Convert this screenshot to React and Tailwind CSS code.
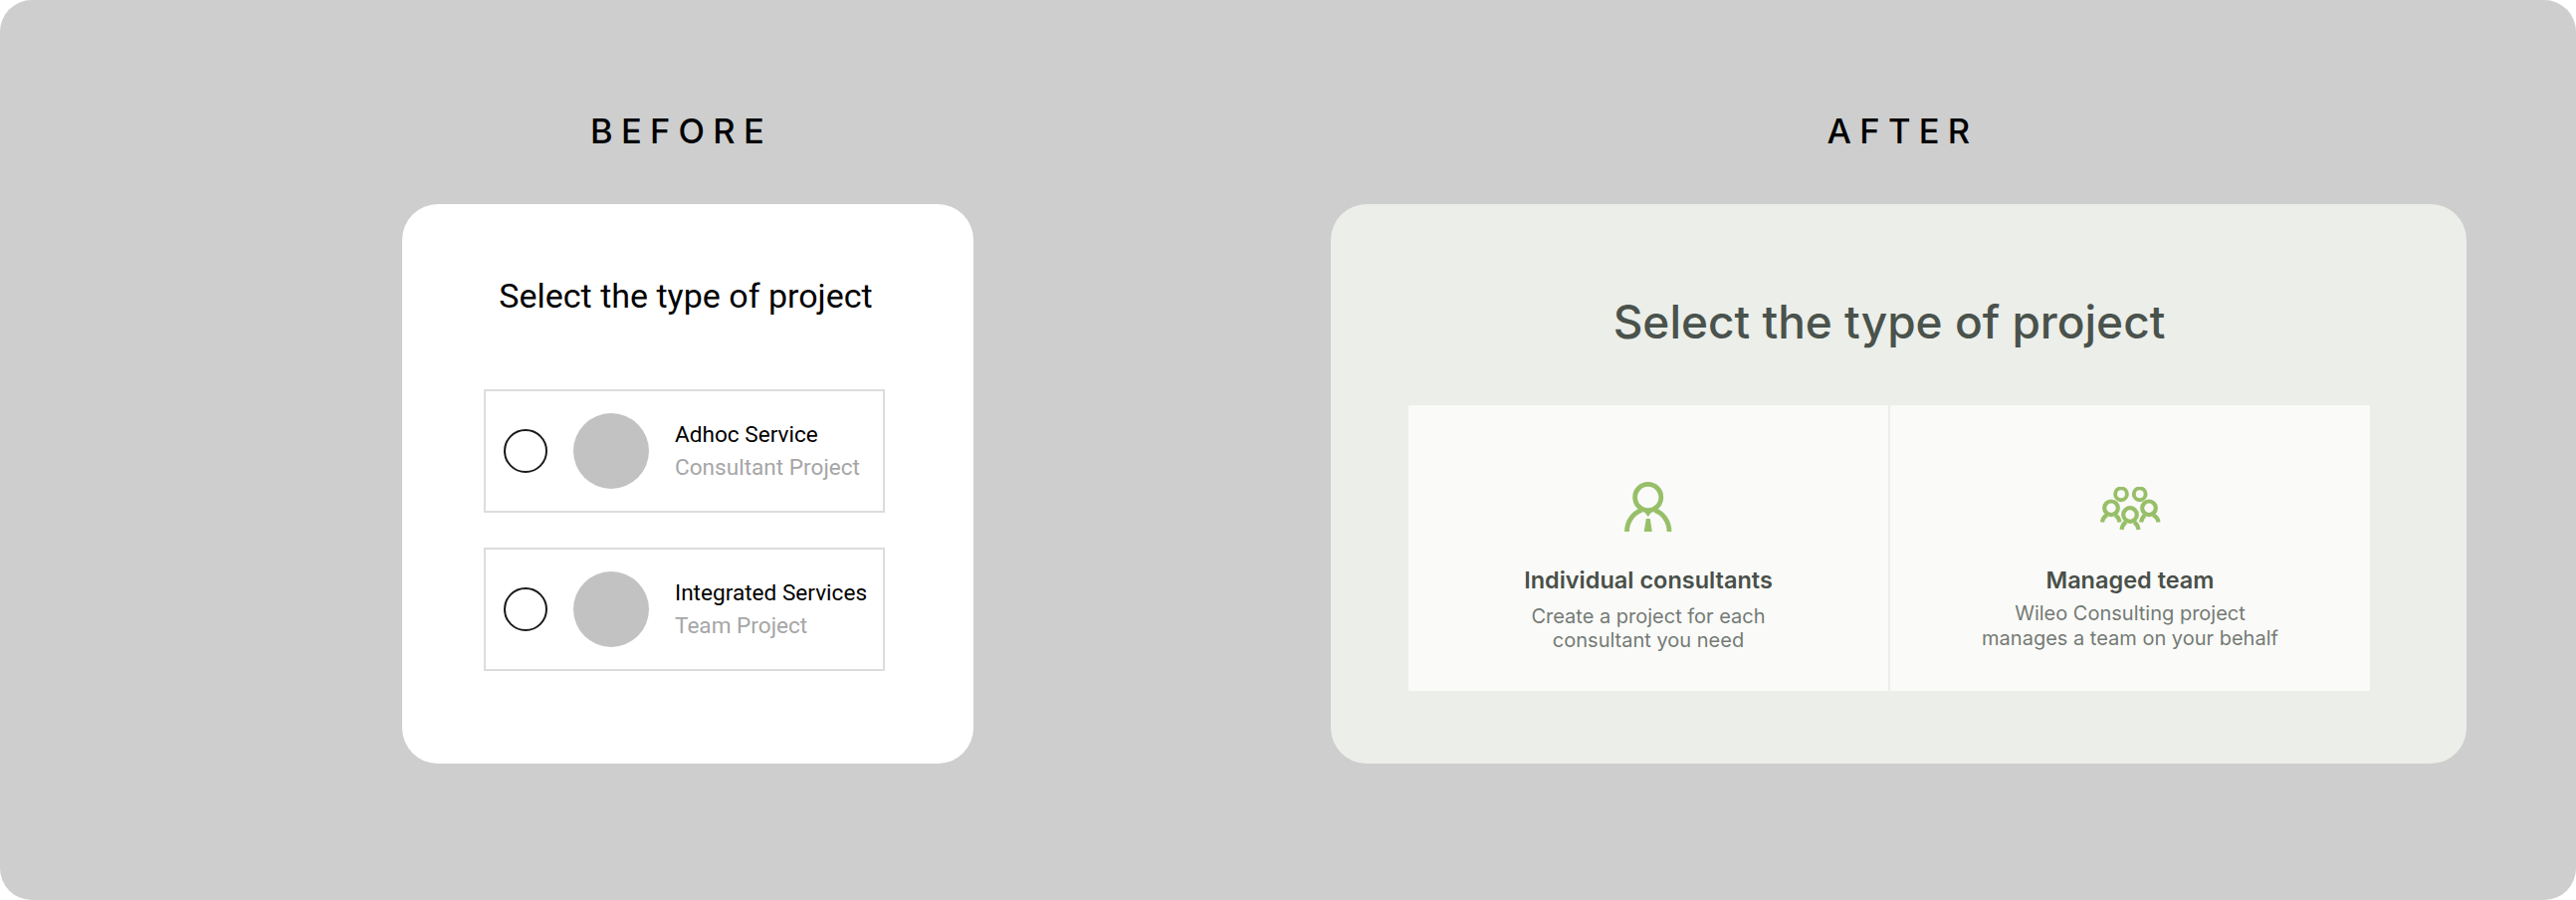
const inter = "font-['Inter',sans-serif]";
const roboto = "font-['Roboto',sans-serif]";

function ConsultantIcon() {
  return (
    <svg width="48" height="50" viewBox="0 0 48 50" fill="none" className="text-[#97bf68]">
      <circle cx="23.7" cy="15.5" r="13.1" stroke="currentColor" strokeWidth="4.8" />
      <path d="M2.5 50C2.5 40 8.5 31.5 17 28.5M45 50C45 40 39 31.5 30.5 28.5" stroke="currentColor" strokeWidth="4.8" />
      <path d="M19.7 50L21.8 37H25.8L27.8 50Z" fill="currentColor" />
      <path d="M20 30H27.5L23.8 35Z" fill="currentColor" />
    </svg>
  );
}

function TeamIcon() {
  return (
    <svg width="61" height="44" viewBox="0 0 61 44" fill="none" stroke="currentColor" className="text-[#97bf68]">
      <circle cx="21" cy="7.3" r="5.9" strokeWidth="3.9" />
      <circle cx="39.7" cy="7.3" r="5.9" strokeWidth="3.9" />
      <circle cx="11" cy="21.3" r="6.8" strokeWidth="4.2" />
      <circle cx="49" cy="21.3" r="6.8" strokeWidth="4.2" />
      <circle cx="30" cy="28" r="6.8" strokeWidth="4.2" />
      <path d="M2 35.5C2.5 32 4.5 29.5 7 28.5M19.5 35.5C19 32.5 17 29.5 15 28.5" strokeWidth="4.2" />
      <path d="M41 35.5C41.5 32.5 43.5 29.5 45 28.5M58.5 35.5C58 32 56 29.5 53 28.5" strokeWidth="4.2" />
      <path d="M21.5 43C22 39.5 24 36.5 26 35.5M38.5 43C38 39.5 36 36.5 34 35.5" strokeWidth="4.2" />
    </svg>
  );
}

function OldOption({ title, sub }) {
  return (
    <div className="flex h-[124px] items-center border-2 border-[#dcdcdc] pl-[18px]">
      <div className="size-[44px] rounded-full border-2 border-[#1a1a1a]"></div>
      <div className="ml-[26px] size-[76px] rounded-full bg-[#c2c2c2]"></div>
      <div className={`ml-[26px] flex flex-col gap-[4px] text-[22.6px] leading-[29px] ${roboto}`}>
        <span className="text-black">{title}</span>
        <span className="text-[#a6a6a6]">{sub}</span>
      </div>
    </div>
  );
}

function NewOption({ icon, iconClass, title, titleClass, lines, bodyClass }) {
  return (
    <div className={`flex flex-1 flex-col items-center bg-[#fafaf8] ${inter} ${iconClass}`}>
      {icon}
      <h3 className={`text-[23.5px] leading-[29px] font-semibold text-[#495049] ${titleClass}`}>{title}</h3>
      <p className={`text-center text-[20px] text-[#747a75] ${bodyClass}`}>
        {lines[0]}
        <br />
        {lines[1]}
      </p>
    </div>
  );
}

export default function App() {
  return (
    <div className="h-[904px] w-[2588px] bg-white">
      <div className="flex h-full rounded-[32px] bg-[#cecece] pt-[111px] pl-[404px]">
        <section className="w-[574px]">
          <h2 className={`pr-[13px] text-center text-[34.5px] leading-[41px] font-medium tracking-[0.24em] text-black ${inter}`}>BEFORE</h2>
          <div className="mt-[53px] flex h-[562px] flex-col rounded-[36px] bg-white pr-[89px] pl-[82px]">
            <h1 className={`mt-[70px] pl-[3px] text-center text-[34px] leading-[44px] text-black ${roboto}`}>Select the type of project</h1>
            <div className="mt-[72px] flex flex-col gap-[35px]">
              <OldOption title="Adhoc Service" sub="Consultant Project" />
              <OldOption title="Integrated Services" sub="Team Project" />
            </div>
          </div>
        </section>
        <section className="ml-[359px] w-[1141px]">
          <h2 className={`pl-[8px] text-center text-[34.5px] leading-[41px] font-medium tracking-[0.24em] text-black ${inter}`}>AFTER</h2>
          <div className="mt-[53px] flex h-[562px] flex-col rounded-[36px] bg-[#eceee9] pr-[97px] pl-[78px]">
            <h1 className={`mt-[89px] text-center text-[46px] leading-[58px] font-medium text-[#4a524c] ${inter}`}>Select the type of project</h1>
            <div className="mt-[55px] flex h-[287px] gap-[2px]">
              <NewOption
                icon={<ConsultantIcon />}
                iconClass="pt-[77px]"
                title="Individual consultants"
                titleClass="mt-[34px]"
                lines={["Create a project for each", "consultant you need"]}
                bodyClass="mt-[10px] leading-[24px]"
              />
              <NewOption
                icon={<TeamIcon />}
                iconClass="pt-[82px]"
                title="Managed team"
                titleClass="mt-[35px]"
                lines={["Wileo Consulting project", "manages a team on your behalf"]}
                bodyClass="mt-[7px] leading-[25px]"
              />
            </div>
          </div>
        </section>
      </div>
    </div>
  );
}
